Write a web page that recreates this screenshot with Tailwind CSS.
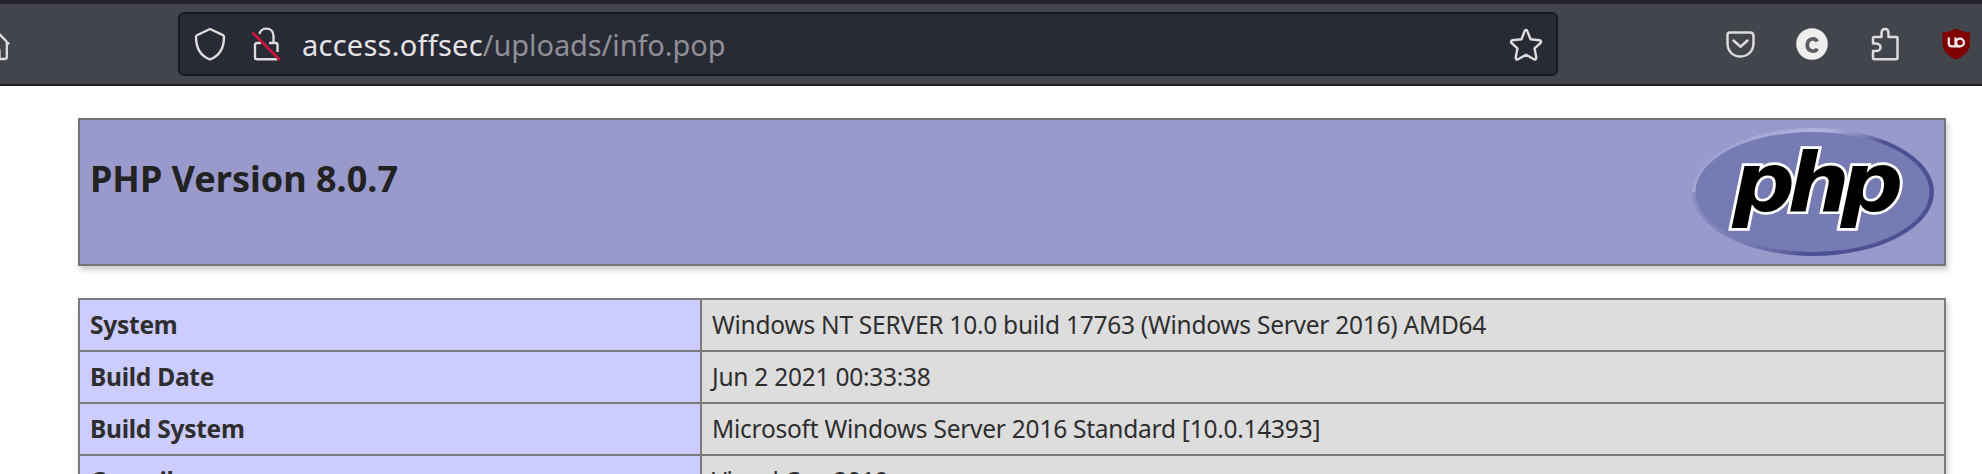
<!DOCTYPE html>
<html lang="en">
<head>
<meta charset="utf-8">
<title>phpinfo()</title>
<script src="https://cdn.jsdelivr.net/npm/@tailwindcss/browser@4"></script>
</head>
<body class="w-[1982px] h-[474px] overflow-hidden bg-white font-['Noto_Sans',sans-serif] text-[#222222]">
<header class="h-[86px] border-t-4 border-t-[#22222d] border-b-2 border-b-[#222127] bg-[#43454c] flex items-center text-[#dcdcdc]">
  <svg class="w-[178px] h-[76px] shrink-0" viewBox="0 6 178 76" fill="none" stroke="currentColor" stroke-width="2.3" stroke-linejoin="round" stroke-linecap="round"><path d="M-7 27.500L8.500 43.500M6.800 42V57Q6.800 59 4.800 59H-0.500V51Q-0.500 47.500-4 47"/></svg>
  <div class="w-[1380px] h-16 shrink-0 flex items-center rounded-[6px] border-2 border-[#17181d] bg-[#282a36] pl-[13px] pr-3">
    <svg class="w-9 h-9 shrink-0" viewBox="0 0 36 36" fill="none" stroke="currentColor" stroke-width="2.4" stroke-linejoin="round"><path d="M17 3L30 9.200Q31 9.700 31 11C31 23 26 30 17 33.500C8 30 3 23 3 11Q3 9.700 4 9.200Z"/></svg>
    <svg class="w-9 h-9 ml-5 shrink-0" viewBox="0 0 36 36" fill="none" stroke="currentColor" stroke-width="2.4" stroke-linejoin="round"><path d="M10.500 8C12 0.500 24.500 0.500 24.500 10V17H27Q28.500 17 28.500 19V26M20 17H24.500M12 17H8Q6 17 6 19V31.500Q6 33.300 8 33.300H28"/><path d="M3.500 6.500L31 34" stroke="#c9163f" stroke-width="2.700"/></svg>
    <div class="ml-[17px] pt-px text-[29px] leading-[40px] whitespace-pre text-[#e4e4e6]"><span class="tracking-[0.24px]">access.offsec</span><span class="text-[#8f9096] tracking-[-0.1px]">/uploads/info.pop</span></div>
    <svg class="w-9 h-9 ml-auto shrink-0" viewBox="0 0 36 36" fill="none" stroke="currentColor" stroke-width="2.4" stroke-linejoin="round"><path d="M18 4Q19 4 19.500 5.500L22.500 13.300L31.500 14.200Q34 15 32.500 17L26.500 22.300L28.300 31.500Q28 34 26 33.300L18 28.800L10 33.300Q8 34 7.700 31.500L9.500 22.300L3.500 17Q2 15 4.500 14.200L13.500 13.300L16.500 5.500Q17 4 18 4Z"/></svg>
  </div>
  <div class="flex items-center gap-9 pl-[165px]">
    <svg class="w-9 h-9 shrink-0" viewBox="0 0 36 36" fill="none" stroke="currentColor" stroke-width="2.5" stroke-linejoin="round" stroke-linecap="round"><path d="M7 6.500H27Q30.500 6.500 30.500 10V17C30.500 25 25 30.500 17.500 30.500C9.500 30.500 4.500 25 4.500 17V9Q4.500 6.500 7 6.500ZM10.500 14.500L17.500 20.800L24.500 14.500"/></svg>
    <svg class="w-9 h-9 shrink-0" viewBox="0 0 36 36"><circle cx="17" cy="18" r="15.800" fill="#eeeeec"/><path d="M22.300 15.500C19.500 10.800 12.300 13 12.300 19C12.300 25.200 19.500 27 22.300 22.700" fill="none" stroke="#5b5e64" stroke-width="3.800"/></svg>
    <svg class="w-9 h-9 shrink-0" viewBox="0 0 36 36" fill="none" stroke="currentColor" stroke-width="2.500" stroke-linejoin="round"><path d="M14.500 11V7.500C14.500 1.500 21.500 1.500 21.500 7.500V11H29.500Q30.500 11 30.500 12.500V31.500Q30.500 33.300 29 33.300H7.500Q6 33.300 6 31.500V25H9C15 25 15 17.500 9 17.500H6V12.500Q6 11 7.500 11Z"/></svg>
    <svg class="w-9 h-9 shrink-0" viewBox="0 0 36 36"><path d="M17 2.500Q23 6 31 6.500V16C31 26 25 30 17 33.500C9 30 3.500 26 3.500 16V6.500Q11 6 17 2.500Z" fill="#800000"/><path d="M9.800 11.500V17.500Q9.800 20.300 12.800 20.300H21M16.500 11.500V20.300" fill="none" stroke="#f4eaea" stroke-width="2.300"/><circle cx="21" cy="16.500" r="3.900" fill="none" stroke="#f4eaea" stroke-width="2.300"/></svg>
  </div>
</header>
<main class="h-[388px] overflow-hidden pt-8 pl-[78px]">
  <section class="w-[1868px] h-[148px] border-2 border-[#73737a] bg-[#9999cc] shadow-[2px_4px_6px_#cccccc] flex justify-between items-start">
    <h1 class="pl-[10px] pt-[33px] text-[36px] leading-[52px] font-bold whitespace-nowrap">PHP Version 8.0.7</h1>
    <svg class="w-[244px] h-[130px] mt-[7px] mr-[9px] shrink-0" viewBox="0 0 244 130">
      <defs>
      <linearGradient id="rimTop" x1="0" y1="0.250" x2="1" y2="0.550"><stop offset="0" stop-color="#8a8cc2"/><stop offset="0.200" stop-color="#a5a7d4"/><stop offset="0.450" stop-color="#b0b3dc"/><stop offset="0.600" stop-color="#8488bd"/><stop offset="0.720" stop-color="#4d5092"/><stop offset="1" stop-color="#4d5092"/></linearGradient>
      <linearGradient id="rimBottom" x1="0" y1="0" x2="1" y2="0"><stop offset="0" stop-color="#8a8cc2"/><stop offset="0.250" stop-color="#7478b0"/><stop offset="0.480" stop-color="#4d5092"/><stop offset="1" stop-color="#4d5092"/></linearGradient></defs>
      <path d="M1 65A121 64 0 0 1 243 65Z" fill="url(#rimTop)"/><path d="M1 65A121 64 0 0 0 243 65Z" fill="url(#rimBottom)"/>
      <ellipse cx="121.500" cy="65" rx="117" ry="60" fill="#777bb3"/>
      <g transform="translate(3 2.500) scale(1.040 0.980)" font-family="DejaVu Sans" font-size="84" font-weight="bold" font-style="italic" fill="#000" stroke="#fff" stroke-width="5.500" paint-order="stroke" stroke-linejoin="miter">
        <text x="37" y="83">p</text><text x="90" y="83">h</text><text x="141" y="83">p</text>
      </g>
    </svg>
  </section>
  <table class="mt-8 w-[1868px] table-fixed border-collapse text-[24.5px] leading-[34px] tracking-[-0.25px] text-[#2e2e2e] shadow-[2px_4px_6px_#cccccc]">
    <colgroup><col class="w-[622px]"><col></colgroup>
    <tbody>
      <tr class="h-[52px]"><td class="border-2 border-[#7b7b7b] bg-[#ccccff] pl-[10px] py-0 font-bold">System</td><td class="border-2 border-[#7b7b7b] bg-[#dddddd] py-0 pl-[10px]">Windows NT SERVER 10.0 build 17763 (Windows Server 2016) AMD64</td></tr>
      <tr class="h-[52px]"><td class="border-2 border-[#7b7b7b] bg-[#ccccff] pl-[10px] py-0 font-bold">Build Date</td><td class="border-2 border-[#7b7b7b] bg-[#dddddd] py-0 pl-[10px]">Jun 2 2021 00:33:38</td></tr>
      <tr class="h-[52px]"><td class="border-2 border-[#7b7b7b] bg-[#ccccff] pl-[10px] py-0 font-bold">Build System</td><td class="border-2 border-[#7b7b7b] bg-[#dddddd] py-0 pl-[10px]">Microsoft Windows Server 2016 Standard [10.0.14393]</td></tr>
      <tr class="h-[52px]"><td class="border-2 border-[#7b7b7b] bg-[#ccccff] pl-[10px] py-0 font-bold">Compiler</td><td class="border-2 border-[#7b7b7b] bg-[#dddddd] py-0 pl-[10px]">Visual C++ 2019</td></tr>
    </tbody>
  </table>
</main>
</body>
</html>
